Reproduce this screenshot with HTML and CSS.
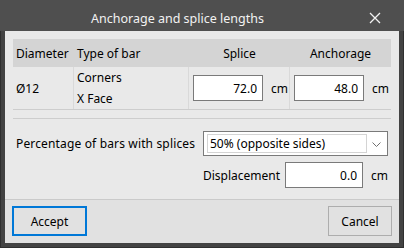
FILE: index.html
```html
<!DOCTYPE html>
<html lang="en">
<head>
  <meta charset="utf-8"/>
  <title>Anchorage and splice lengths</title>
  <link rel="stylesheet" href="styles.css">
</head>
<body>
	<div class="window">
		<div class="titlebar">
			<span class="title">Anchorage and splice lengths</span>
			<span class="close">
				<svg width="12" height="12" viewBox="0 0 12 12"><path d="M1 1 L11 11 M11 1 L1 11" stroke="#f2f2f2" stroke-width="1.3" fill="none"/></svg>
			</span>
		</div>

		<div class="client">
			<div class="content">
				<div class="bars">
					<div class="head">
						<div class="cell">Diameter</div>
						<div class="cell">Type of bar</div>
						<div class="cell center">Splice</div>
						<div class="cell center">Anchorage</div>
					</div>
					<div class="body">
						<div class="cell sep">Ø12</div>
						<div class="cell sep types">
							<span>Corners</span>
							<span>X Face</span>
						</div>
						<div class="cell sep field">
							<input type="text" class="edit" value="72.0">
							<span class="unit">cm</span>
						</div>
						<div class="cell field">
							<input type="text" class="edit" value="48.0">
							<span class="unit">cm</span>
						</div>
					</div>
				</div> <!-- class=bars -->

				<div class="options">
					<label class="lbl-pct">Percentage of bars with splices</label>
					<div class="combo">
						<span class="combo-text">50% (opposite sides)</span>
						<svg class="chevron" width="9" height="5" viewBox="0 0 9 5"><path d="M0.5 0.5 L4.5 4.5 L8.5 0.5" stroke="#707070" fill="none"/></svg>
					</div>
					<div class="disp">
						<label>Displacement</label>
						<input type="text" class="edit narrow" value="0.0">
						<span class="unit">cm</span>
					</div>
				</div> <!-- class=options -->
			</div>

			<div class="footer">
				<button class="btn default">Accept</button>
				<button class="btn">Cancel</button>
			</div>
		</div>
	</div>
</body>
</html>
```

FILE: styles.css
```css
	body {
		margin: 0;
		background-color: #3a3a3a;
		font-family: "Noto Sans", sans-serif;
		font-size: 12px;
		color: #000000;
	}

	.window {
		width: 404px;
		height: 248px;
		box-sizing: border-box;
		display: flex;
		flex-direction: column;
		background-color: #434343;
		border: 1px solid #2f2f2f;
		border-top: none;
	}

	.titlebar {
		height: 31px;
		display: flex;
		align-items: center;
		padding-top: 5px;
		padding-right: 9px;
		box-sizing: border-box;
		background-color: #4f4f4f;
		margin: 0 -1px;
		color: #f2f2f2;
		font-size: 12.5px;
	}

	.title {
		flex: 1;
		text-align: center;
	}

	.close {
		width: 40px;
		display: flex;
		justify-content: center;
	}

	.client {
		flex: 1;
		margin: 0 4px 4px 4px;
		display: flex;
		flex-direction: column;
		background-color: #e9e9e9;
	}

	.content {
		flex: 1;
		padding: 8px 8px 0 8px;
	}

	/* bars table */
	.bars {
		border-bottom: 1px solid #cdcdcd;
	}

	.head, .body {
		display: grid;
		grid-template-columns: 61px 115px 101px 101px;
	}

	.head {
		height: 28px;
		background-color: #d4d4d4;
		align-items: center;
	}

	.body {
		height: 42px;
	}

	.cell {
		padding-left: 3px;
	}

	.center {
		text-align: center;
		padding-left: 0;
	}

	.body .cell {
		display: flex;
		align-items: center;
	}

	.sep {
		border-right: 1px solid #d9d9d9;
	}

	.body .types {
		flex-direction: column;
		align-items: flex-start;
		justify-content: center;
		line-height: 21px;
	}

	.body .field {
		padding-left: 4px;
	}

	.edit {
		width: 70px;
		height: 26px;
		box-sizing: border-box;
		border: 1px solid #7a7a7a;
		background: #ffffff;
		padding: 0 5px 0 0;
		margin: 0;
		text-align: right;
		font-family: inherit;
		font-size: 12px;
		color: #000000;
	}

	.unit {
		margin-left: 8px;
	}

	/* splice options */
	.options {
		margin-top: 8px;
		border-top: 1px solid #cdcdcd;
		padding-top: 12px;
		display: grid;
		grid-template-columns: 190px 185px;
		row-gap: 6px;
		align-items: center;
	}

	.lbl-pct {
		padding-left: 3px;
		letter-spacing: 0.15px;
	}

	.combo {
		height: 25px;
		box-sizing: border-box;
		border: 1px solid #7a7a7a;
		background: #ffffff;
		display: flex;
		align-items: center;
		position: relative;
	}

	.combo-text {
		margin: 1px 20px 2px 3px;
		padding-left: 2px;
		flex: 1;
		height: 19px;
		line-height: 18px;
		box-sizing: border-box;
		border: 1px solid #d4d4d4;
	}

	.chevron {
		position: absolute;
		right: 6px;
		top: 10px;
	}

	.disp {
		grid-column: 2;
		display: flex;
		align-items: center;
	}

	.disp label {
		width: 84px;
	}

	.edit.narrow {
		width: 78px;
	}

	/* buttons */
	.footer {
		height: 44px;
		box-sizing: border-box;
		border-top: 1px solid #cacaca;
		background-color: #e1e1e1;
		padding: 6px 7px 0 7px;
		display: flex;
		justify-content: space-between;
		align-items: flex-start;
	}

	.btn {
		height: 30px;
		width: 64px;
		margin: 0;
		box-sizing: border-box;
		border: 1px solid #adadad;
		background-color: #e1e1e1;
		font-family: inherit;
		font-size: 12px;
		color: #000000;
	}

	.btn.default {
		width: 75px;
		border: 2px solid #0078d7;
	}
```
